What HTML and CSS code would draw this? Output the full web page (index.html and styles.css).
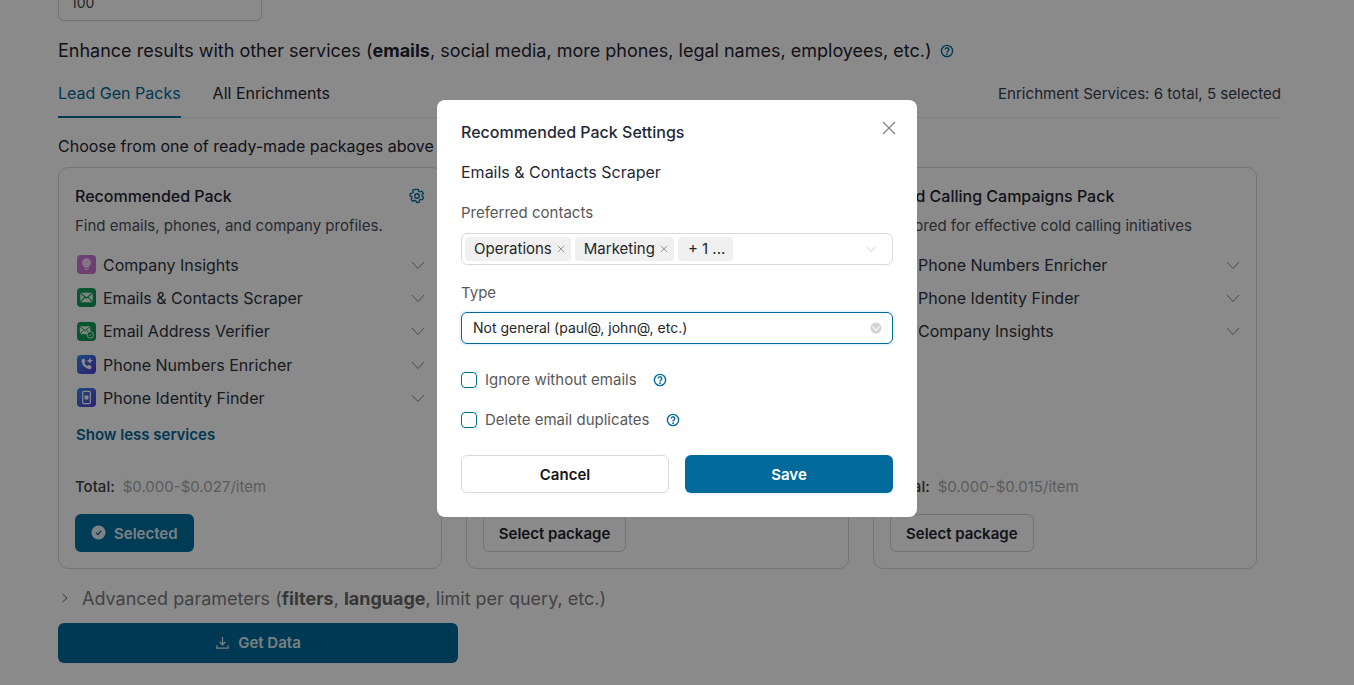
FILE: index.html
```html
<!DOCTYPE html>
<html lang="en">
<head>
<meta charset="utf-8">
<title>Recommended Pack Settings</title>
<link rel="stylesheet" href="styles.css">
</head>
<body>
<svg class="defs" width="0" height="0" aria-hidden="true">
  <defs>
    <linearGradient id="gp" x1="0" y1="0" x2="1" y2="1"><stop offset="0" stop-color="#c878e0"/><stop offset="1" stop-color="#d070c8"/></linearGradient>
    <linearGradient id="gg" x1="0" y1="0" x2="1" y2="1"><stop offset="0" stop-color="#10a45e"/><stop offset="1" stop-color="#0c9450"/></linearGradient>
    <linearGradient id="gb" x1="0" y1="0" x2="1" y2="1"><stop offset="0" stop-color="#3088e8"/><stop offset="1" stop-color="#5a38d8"/></linearGradient>
    <symbol id="chev" viewBox="0 0 16 16"><path d="M2 5l6 6.500L14 5" fill="none" stroke="currentColor" stroke-width="1"/></symbol>
    <symbol id="help" viewBox="0 0 16 16"><circle cx="8" cy="8" r="6.400" fill="none" stroke="currentColor" stroke-width="1.600"/><path d="M6 6.400a2 2 0 1 1 3 1.700c-.7.4-1 .8-1 1.500" fill="none" stroke="currentColor" stroke-width="1.600"/><circle cx="8" cy="11.600" r="1" fill="currentColor"/></symbol>
    <symbol id="i-company" viewBox="0 0 20 20"><rect width="20" height="20" rx="4" fill="url(#gp)"/><path d="M10 3.500a4.700 4.700 0 0 0-2.600 8.600v1.400h5.200v-1.400A4.700 4.700 0 0 0 10 3.500z" fill="#f0d4f6"/><rect x="7.800" y="14.400" width="4.400" height="1.500" rx=".7" fill="#f0d4f6"/></symbol>
    <symbol id="i-mail" viewBox="0 0 20 20"><rect width="20" height="20" rx="4" fill="url(#gg)"/><rect x="3.500" y="5" width="13" height="10" rx="1" fill="#e6f7ee"/><path d="M3.800 5.400L10 10.500l6.200-5.100M3.800 14.600l4.400-5M16.200 14.600l-4.400-5" fill="none" stroke="#0c9450" stroke-width="1.100"/></symbol>
    <symbol id="i-verify" viewBox="0 0 20 20"><rect width="20" height="20" rx="4" fill="url(#gg)"/><rect x="3" y="4.500" width="11" height="8.500" rx="1" fill="#e6f7ee"/><path d="M3.300 5L8.500 9l5.200-4M3.300 12.600l3.600-4M13.700 12.600l-3.600-4" fill="none" stroke="#0c9450" stroke-width="1"/><circle cx="14" cy="13.500" r="3.400" fill="#0c9450" stroke="#e6f7ee"/><path d="M12.600 13.500l1 1 1.800-1.900" fill="none" stroke="#e6f7ee"/></symbol>
    <symbol id="i-phone" viewBox="0 0 20 20"><rect width="20" height="20" rx="4" fill="url(#gb)"/><path d="M5.500 4.500l2.300-.5 1.200 3-1.400 1.100a8 8 0 0 0 3.600 3.600l1.100-1.400 3 1.200-.5 2.600c-.2.600-.8.900-1.400.8C8.600 14.300 5.200 10.600 4.700 5.900c0-.6.300-1.200.800-1.400z" fill="#fff"/><path d="M13.500 3.500v5M11 6h5" stroke="#fff" stroke-width="1.500"/></symbol>
    <symbol id="i-identity" viewBox="0 0 20 20"><rect width="20" height="20" rx="4" fill="url(#gb)"/><rect x="6" y="3.500" width="8" height="13" rx="1.200" fill="none" stroke="#fff" stroke-width="1.300"/><rect x="8" y="8" width="4" height="4" rx=".6" fill="#fff"/></symbol>
  </defs>
</svg>

<main class="page">
  <div class="qty-input">100</div>
  <h2 class="enhance">Enhance results with other services (<b>emails</b>, social media, more phones, legal names, employees, etc.) <svg class="help-lg"><use href="#help"/></svg></h2>

  <div class="tabs">
    <span class="tab active">Lead Gen Packs</span>
    <span class="tab">All Enrichments</span>
    <span class="tab-count">Enrichment Services: 6 total, 5 selected</span>
  </div>

  <p class="choose">Choose from one of ready-made packages above</p>

  <section class="cards">
    <article class="card">
      <div class="card-head">
        <h3>Recommended Pack</h3>
        <svg class="gear" viewBox="0 0 24 24" fill="none" stroke="currentColor" stroke-width="1.700"><circle cx="12" cy="12" r="3"/><path d="M10.300 3.200h3.400l.6 2.600 1.700.8 2.400-1.200 2.200 3-1.800 1.900.1 1.800 2 1.600-1.700 3.300-2.600-.6-1.400 1.200-.1 2.700-3.600.4-1-2.500-1.800-.5-2.200 1.500-2.500-2.700 1.400-2.300-.5-1.700L2.500 12l.7-3.600 2.700-.1L7 6.900 6.300 4.300z" stroke-linejoin="round"/></svg>
      </div>
      <p class="card-sub">Find emails, phones, and company profiles.</p>
      <ul class="services">
        <li><svg class="svc"><use href="#i-company"/></svg><span>Company Insights</span><svg class="chev"><use href="#chev"/></svg></li>
        <li><svg class="svc"><use href="#i-mail"/></svg><span>Emails &amp; Contacts Scraper</span><svg class="chev"><use href="#chev"/></svg></li>
        <li><svg class="svc"><use href="#i-verify"/></svg><span>Email Address Verifier</span><svg class="chev"><use href="#chev"/></svg></li>
        <li><svg class="svc"><use href="#i-phone"/></svg><span>Phone Numbers Enricher</span><svg class="chev"><use href="#chev"/></svg></li>
        <li><svg class="svc"><use href="#i-identity"/></svg><span>Phone Identity Finder</span><svg class="chev"><use href="#chev"/></svg></li>
      </ul>
      <a class="show-less">Show less services</a>
      <div class="card-foot">
        <div class="total"><b>Total:</b><span>$0.000-$0.027/item</span></div>
        <button class="btn selected"><svg viewBox="0 0 16 16"><circle cx="8" cy="8" r="7.500" fill="currentColor"/><path d="M5.300 8.200l2 2 3.500-3.800" fill="none" stroke="#00618f" stroke-width="1.300"/></svg>Selected</button>
      </div>
    </article>

    <article class="card">
      <div class="card-foot">
        <button class="btn outline middle">Select package</button>
      </div>
    </article>

    <article class="card">
      <div class="card-head"><h3>Cold Calling Campaigns Pack</h3></div>
      <p class="card-sub">Tailored for effective cold calling initiatives</p>
      <ul class="services">
        <li><svg class="svc"><use href="#i-phone"/></svg><span>Phone Numbers Enricher</span><svg class="chev"><use href="#chev"/></svg></li>
        <li><svg class="svc"><use href="#i-identity"/></svg><span>Phone Identity Finder</span><svg class="chev"><use href="#chev"/></svg></li>
        <li><svg class="svc"><use href="#i-company"/></svg><span>Company Insights</span><svg class="chev"><use href="#chev"/></svg></li>
      </ul>
      <div class="card-foot">
        <div class="total"><b>Total:</b><span>$0.000-$0.015/item</span></div>
        <button class="btn outline">Select package</button>
      </div>
    </article>
  </section>

  <div class="advanced">
    <svg viewBox="0 0 10 10"><path d="M2.500 1l4.500 4-4.500 4" fill="none" stroke="currentColor"/></svg>
    <span>Advanced parameters (<b>filters</b>, <b>language</b>, limit per query, etc.)</span>
  </div>

  <button class="get-data"><svg viewBox="0 0 16 16" fill="none" stroke="currentColor" stroke-width="1.300"><path d="M8 2v8M5 7.500L8 10.500l3-3M2 11v3h12v-3"/></svg>Get Data</button>
</main>

<div class="overlay"></div>

<div class="modal" role="dialog">
  <svg class="close" viewBox="0 0 14 14"><path d="M1 1l12 12M13 1L1 13" stroke="currentColor" stroke-width="1.200"/></svg>
  <h2 class="modal-title">Recommended Pack Settings</h2>
  <p class="modal-sub">Emails &amp; Contacts Scraper</p>

  <label class="field-label">Preferred contacts</label>
  <div class="multi">
    <span class="chip">Operations<svg viewBox="0 0 10 10"><path d="M1 1l8 8M9 1L1 9" stroke="currentColor"/></svg></span>
    <span class="chip">Marketing<svg viewBox="0 0 10 10"><path d="M1 1l8 8M9 1L1 9" stroke="currentColor"/></svg></span>
    <span class="chip more">+ 1 ...</span>
    <svg class="select-chev"><use href="#chev"/></svg>
  </div>

  <label class="field-label type-label">Type</label>
  <div class="select-focus">
    <span>Not general (paul@, john@, etc.)</span>
    <svg class="clear" viewBox="0 0 14 14"><circle cx="7" cy="7" r="6.500" fill="#d4d4d4"/><path d="M2.800 5L7 9.800 11.200 5" fill="none" stroke="#fff" stroke-width="1.200"/></svg>
  </div>

  <div class="check first"><i class="box"></i><span>Ignore without emails</span><svg class="help"><use href="#help"/></svg></div>
  <div class="check"><i class="box"></i><span>Delete email duplicates</span><svg class="help"><use href="#help"/></svg></div>

  <div class="actions">
    <button class="cancel">Cancel</button>
    <button class="save">Save</button>
  </div>
</div>
</body>
</html>
```
FILE: styles.css
```css
* { box-sizing: border-box; }
html, body { margin: 0; height: 100%; overflow: hidden; }
body { font-family: Inter, "Liberation Sans", sans-serif; color: #1f2937; background: #fff; font-size: 16px; }
.defs { position: absolute; }
ul { list-style: none; margin: 0; padding: 0; }
p, h2, h3 { margin: 0; font-weight: 400; }
button { font-family: inherit; cursor: pointer; }

.page { padding: 0 73px 0 58px; margin-top: -20px; }
.qty-input { width: 204px; height: 41px; border: 1px solid #d4d4d4; border-radius: 6px; padding: 12px 12px 0; font-size: 14px; line-height: 20px; color: #444; }

.enhance { margin-top: 18px; font-size: 18px; line-height: 24px; color: #1f2430; white-space: nowrap; }
.enhance b { font-weight: 700; }
.help-lg { width: 14px; height: 14px; color: #00689b; margin-left: 3px; vertical-align: -1px; }

.tabs { display: flex; align-items: flex-start; height: 37px; margin-top: 18px; border-bottom: 1px solid #e5e7eb; font-size: 16px; line-height: 24px; gap: 32px; }
.tab { height: 37px; line-height: 24px; color: #1f2430; }
.tab.active { color: #00689b; border-bottom: 2px solid #00689b; }
.tab-count { margin: 1px 0 0 auto; font-size: 15.100px; color: #374151; }

.choose { margin-top: 16px; font-size: 16px; line-height: 24px; color: #1f2430; white-space: nowrap; }

.cards { display: grid; grid-template-columns: 384px 383px 384px; gap: 24px; margin-top: 9px; height: 402px; }
.card { display: flex; flex-direction: column; border: 1px solid #d9d9d9; border-radius: 10px; padding: 16px; min-width: 0; }
.card-head { display: flex; justify-content: space-between; align-items: center; height: 24px; }
.card-head h3 { font-size: 16px; font-weight: 500; color: #1f2430; }
.gear { width: 18px; height: 18px; color: #00689b; margin-right: -1px; }
.card-sub { margin-top: 7px; font-size: 15px; line-height: 22px; color: #4b4f58; white-space: nowrap; }
.services { margin-top: 11px; }
.services li { display: flex; align-items: center; height: 33.300px; font-size: 16px; color: #2d3340; }
.svc { width: 19px; height: 19px; margin: 0 7px 0 2px; flex: none; }
.chev { width: 16px; height: 16px; margin-left: auto; margin-right: -1px; color: #8a8a8a; flex: none; }
.show-less { margin: 10px 0 0 1px; font-size: 15px; font-weight: 600; line-height: 22px; color: #00689b; }

.card-foot { margin-top: auto; }
.total { display: flex; gap: 8px; font-size: 15px; line-height: 20px; color: #3b3f47; margin-bottom: 17px; }
.total b { font-weight: 500; }
.total span { color: #aaa; }

.btn { display: inline-flex; align-items: center; height: 38px; border-radius: 6px; font-size: 15px; font-weight: 600; padding: 0 15px; }
.btn.selected { width: 119px; padding: 0 16px; background: #00709f; border: 0; color: rgba(255, 255, 255, .9); gap: 8px; }
.btn.selected svg { width: 15px; height: 15px; margin-top: -2px; }
.btn.outline { background: #fff; border: 1px solid #d4d4d4; color: #1f2430; justify-content: center; }
.btn.outline.middle { width: 143px; padding: 0; }

.advanced { display: flex; align-items: center; margin-top: 17px; height: 24px; font-size: 18px; color: #7c7c7c; white-space: nowrap; }
.advanced svg { width: 10px; height: 10px; margin: 0 12px 0 2px; color: #666; }
.advanced b { font-weight: 700; color: #666; }

.get-data { display: flex; align-items: center; justify-content: center; gap: 8px; width: 400px; height: 40px; margin-top: 13px; padding: 0 0 2px; border: 0; border-radius: 6px; background: #006a9c; color: rgba(255, 255, 255, .9); font-size: 15px; font-weight: 600; }
.get-data svg { width: 15px; height: 15px; }

.overlay { position: fixed; inset: 0; background: rgba(0, 0, 0, .46); }

.modal { position: fixed; left: 437px; top: 100px; width: 480px; height: 417px; background: #fff; border-radius: 8px; padding: 20px 24px 24px; }
.close { position: absolute; top: 21px; right: 21px; width: 14px; height: 14px; color: #808080; }
.modal-title { font-size: 16px; font-weight: 500; line-height: 24px; color: #1f2937; }
.modal-sub { margin-top: 16px; font-size: 16px; line-height: 24px; color: #1f2937; }
.field-label { display: block; margin-top: 17px; font-size: 15px; line-height: 24px; color: #595959; }
.type-label { margin-top: 16px; }
.multi { display: flex; align-items: center; height: 32px; margin-top: 8px; padding: 0 3px; border: 1px solid #d9d9d9; border-radius: 6px; }
.chip { display: inline-flex; align-items: center; gap: 5px; height: 24px; margin-right: 4px; padding: 0 6px 2px 9px; border-radius: 4px; background: #f0f0f0; font-size: 15px; color: #262626; }
.chip svg { width: 8px; height: 8px; color: #808080; margin-top: 2px; }
.chip.more { padding: 0 8px 2px 10px; }
.select-chev { width: 12px; height: 12px; color: #bfbfbf; margin-left: auto; margin-right: 12px; }
.select-focus { display: flex; align-items: center; justify-content: space-between; height: 32px; margin-top: 7px; padding: 0 10px 2px 11px; border: 1px solid #00689b; border-radius: 6px; box-shadow: 0 0 0 2px rgba(0, 120, 200, .08); font-size: 14px; color: #262626; }
.clear { width: 12px; height: 12px; margin-top: 2px; }

.check { display: flex; align-items: center; height: 24px; margin-top: 16px; padding-bottom: 1px; font-size: 15px; color: #595959; }
.check.first { margin-top: 24px; }
.box { width: 16px; height: 16px; border: 1px solid #00689b; border-radius: 4px; margin-right: 8px; }
.help { width: 14px; height: 14px; color: #00689b; margin-left: 16px; }

.actions { display: grid; grid-template-columns: 208px 208px; gap: 16px; margin-top: 23px; }
.actions button { height: 38px; border-radius: 6px; font-size: 15px; font-weight: 600; }
.cancel { background: #fff; border: 1px solid #d9d9d9; color: #141414; box-shadow: 0 2px 0 rgba(0, 0, 0, .02); }
.save { background: #006a9c; border: 0; color: #fff; box-shadow: 0 2px 0 rgba(5, 145, 255, .08); }
```
